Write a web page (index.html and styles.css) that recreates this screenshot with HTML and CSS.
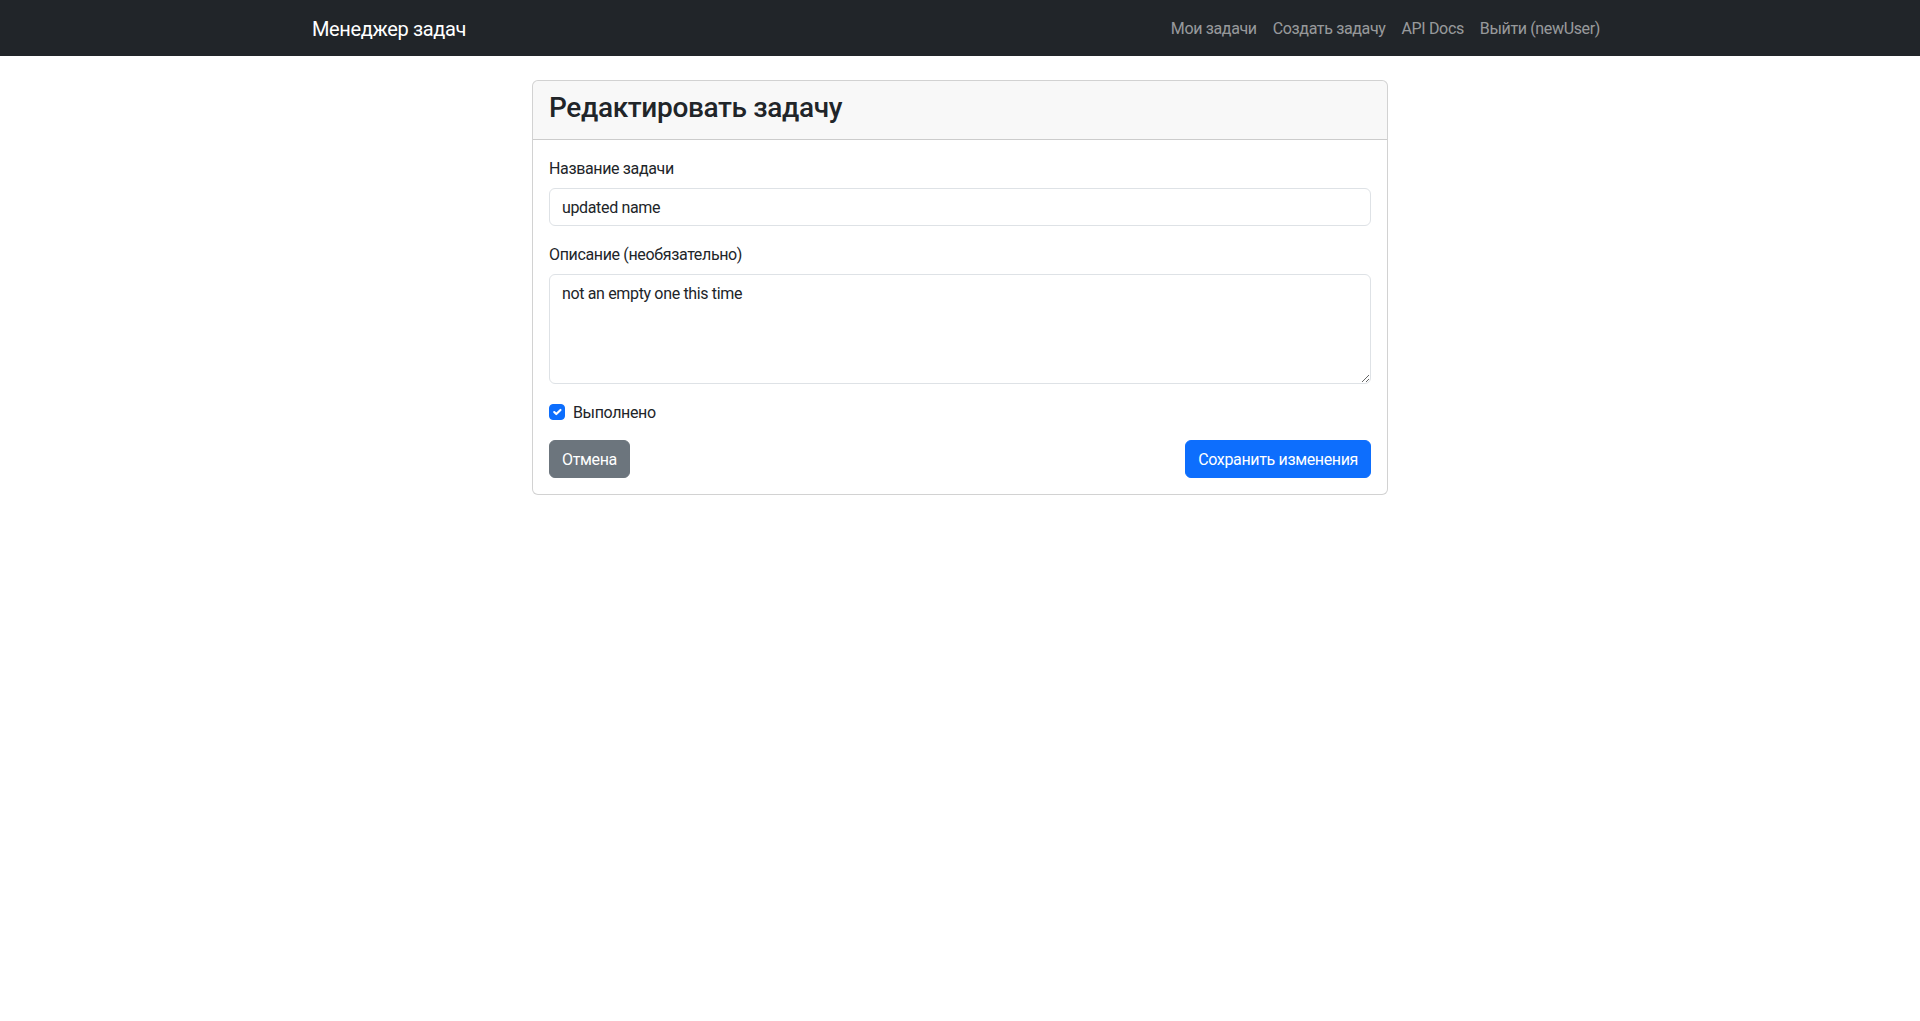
FILE: index.html
```html
<!DOCTYPE html>
<html lang="ru">
<head>
<meta charset="utf-8">
<title>Редактировать задачу</title>
<link rel="stylesheet" href="styles.css">
</head>
<body>
<nav class="navbar">
  <div class="container nav-inner">
    <a class="brand" href="#">Менеджер задач</a>
    <ul class="nav-links">
      <li><a href="#">Мои задачи</a></li>
      <li><a href="#">Создать задачу</a></li>
      <li><a href="#">API Docs</a></li>
      <li><a href="#">Выйти (newUser)</a></li>
    </ul>
  </div>
</nav>
<main class="container main">
  <div class="col">
    <div class="card">
      <div class="card-header"><h3 class="card-title">Редактировать задачу</h3></div>
      <form class="card-body">
        <div class="field">
          <label class="label" for="name">Название задачи</label>
          <input class="control" id="name" type="text" value="updated name">
        </div>
        <div class="field">
          <label class="label" for="desc">Описание (необязательно)</label>
          <textarea class="control textarea" id="desc" rows="4">not an empty one this time</textarea>
        </div>
        <div class="check">
          <span class="check-box"><svg viewBox="0 0 20 20" width="16" height="16"><path fill="none" stroke="#fff" stroke-linecap="round" stroke-linejoin="round" stroke-width="3" d="m6 10 3 3 6-6"/></svg></span>
          <label class="check-label">Выполнено</label>
        </div>
        <div class="actions">
          <a class="btn btn-secondary" href="#">Отмена</a>
          <button class="btn btn-primary" type="button">Сохранить изменения</button>
        </div>
      </form>
    </div>
  </div>
</main>
</body>
</html>
```
FILE: styles.css
```css
* { box-sizing: border-box; }
html, body { margin: 0; padding: 0; }
body {
  font-family: Roboto, "Noto Sans", "Liberation Sans", sans-serif;
  font-size: 16px;
  line-height: 1.5;
  letter-spacing: -0.022em;
  color: #212529;
  background: #fff;
}
.container {
  max-width: 1320px;
  margin: 0 auto;
  padding: 0 12px;
}
.navbar {
  background: #212529;
  padding: 8px 0;
}
.nav-inner {
  display: flex;
  align-items: center;
  justify-content: space-between;
}
.brand {
  color: #fff;
  text-decoration: none;
  font-size: 20px;
  line-height: 30px;
  padding: 6px 0 4px;
}
.nav-links {
  list-style: none;
  margin: 0;
  padding: 0;
  display: flex;
}
.nav-links a {
  display: block;
  padding: 9px 8px 7px;
  color: rgba(255,255,255,.55);
  text-decoration: none;
  line-height: 24px;
}
.main {
  margin-top: 24px;
  display: flex;
  justify-content: center;
}
.col {
  width: 880px;
  padding: 0 12px;
}
.card {
  border: 1px solid rgba(0,0,0,.175);
  border-radius: 6px;
  background: #fff;
}
.card-header {
  background: rgba(33,37,41,.03);
  border-bottom: 1px solid rgba(0,0,0,.175);
  padding: 8px 16px;
  border-radius: 5px 5px 0 0;
}
.card-title {
  margin: 2px 0 6px;
  font-size: 28px;
  font-weight: 500;
  line-height: 1.2;
}
.card-body {
  padding: 16px;
  margin: 0;
}
.field { margin-bottom: 16px; }
.label {
  display: block;
  line-height: 24px;
  padding-top: 1px;
  margin-bottom: 7px;
}
.control {
  display: block;
  width: 100%;
  padding: 7px 12px 5px;
  font: inherit;
  font-size: 16px;
  line-height: 1.5;
  letter-spacing: -0.022em;
  color: #212529;
  background: #fff;
  border: 1px solid #dee2e6;
  border-radius: 6px;
  outline: none;
}
.textarea {
  resize: vertical;
  min-height: 110px;
  height: 110px;
}
.check {
  display: flex;
  align-items: flex-start;
  height: 24px;
  margin-bottom: 16px;
}
.check-box {
  width: 16px;
  height: 16px;
  margin-top: 4px;
  margin-right: 8px;
  background: #0d6efd;
  border: 1px solid #0d6efd;
  border-radius: 4px;
  display: flex;
  align-items: center;
  justify-content: center;
}
.check-box svg { display: block; width: 14px; height: 14px; }
.check-label {
  display: block;
  line-height: 24px;
  height: 24px;
  padding-top: 1px;
}
.actions {
  display: flex;
  justify-content: space-between;
}
.btn {
  display: inline-block;
  padding: 7px 12px 5px;
  font: inherit;
  font-size: 16px;
  line-height: 1.5;
  letter-spacing: -0.022em;
  border: 1px solid transparent;
  border-radius: 6px;
  color: #fff;
  text-decoration: none;
  cursor: pointer;
}
.btn-secondary { background: #6c757d; border-color: #6c757d; }
.btn-primary { background: #0d6efd; border-color: #0d6efd; }
```
